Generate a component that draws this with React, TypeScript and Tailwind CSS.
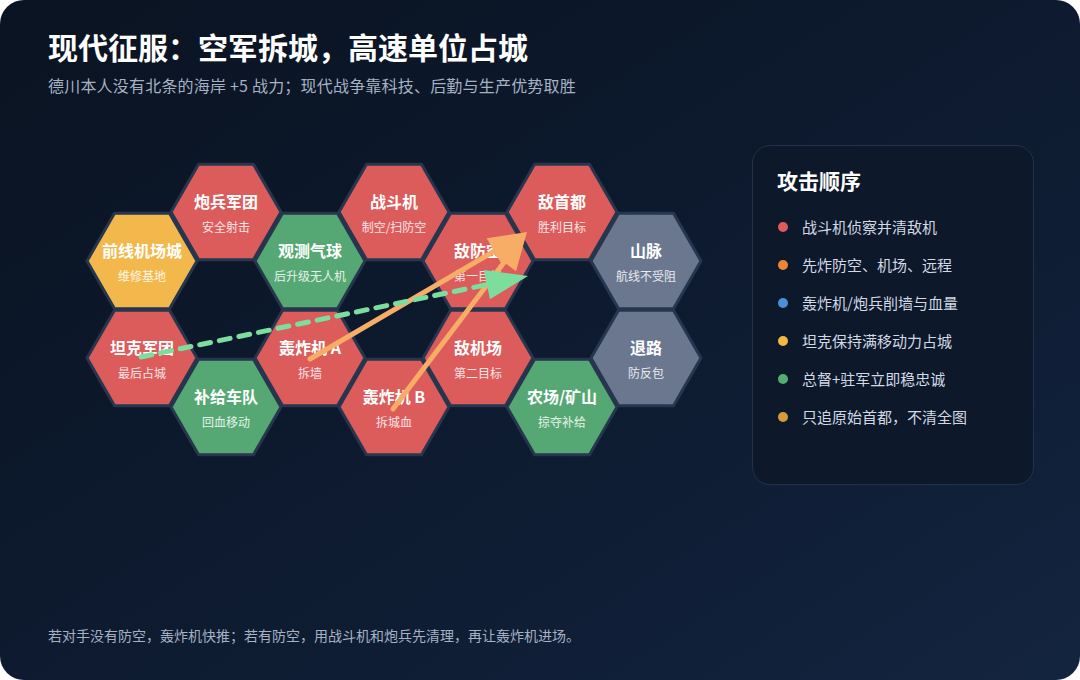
import React from 'react';

type Hex = {
  x: number;
  y: number;
  title: string;
  sub: string;
  fill: string;
};

// page coords of hex centres (flat-top, r≈56, column pitch 84)
const CANVAS_X = 48;
const CANVAS_Y = 146;

const hexes: Hex[] = [
  { x: 142, y: 262, title: '前线机场城', sub: '维修基地', fill: '#f2b84b' },
  { x: 142, y: 359, title: '坦克军团', sub: '最后占城', fill: '#dc5b5b' },
  { x: 226, y: 213, title: '炮兵军团', sub: '安全射击', fill: '#dc5b5b' },
  { x: 226, y: 408, title: '补给车队', sub: '回血移动', fill: '#55a873' },
  { x: 310, y: 262, title: '观测气球', sub: '后升级无人机', fill: '#55a873' },
  { x: 310, y: 359, title: '轰炸机 A', sub: '拆墙', fill: '#dc5b5b' },
  { x: 394, y: 213, title: '战斗机', sub: '制空/扫防空', fill: '#dc5b5b' },
  { x: 394, y: 408, title: '轰炸机 B', sub: '拆城血', fill: '#dc5b5b' },
  { x: 478, y: 262, title: '敌防空', sub: '第一目标', fill: '#dc5b5b' },
  { x: 478, y: 359, title: '敌机场', sub: '第二目标', fill: '#dc5b5b' },
  { x: 562, y: 213, title: '敌首都', sub: '胜利目标', fill: '#dc5b5b' },
  { x: 562, y: 408, title: '农场/矿山', sub: '掠夺补给', fill: '#55a873' },
  { x: 646, y: 262, title: '山脉', sub: '航线不受阻', fill: '#6a778f' },
  { x: 646, y: 359, title: '退路', sub: '防反包', fill: '#6a778f' },
];

const order = [
  { color: '#e05a5a', text: '战斗机侦察并清敌机' },
  { color: '#ec843a', text: '先炸防空、机场、远程' },
  { color: '#4a90d9', text: '轰炸机/炮兵削墙与血量' },
  { color: '#f4b942', text: '坦克保持满移动力占城' },
  { color: '#56ac72', text: '总督+驻军立即稳忠诚' },
  { color: '#d99a3c', text: '只追原始首都，不清全图' },
];

const W = 116;
const H = 102;
const R = 55;

function hexPoints() {
  const cx = W / 2;
  const cy = H / 2;
  const pts: string[] = [];
  for (let k = 0; k < 6; k++) {
    const a = (Math.PI / 3) * k;
    pts.push(`${(cx + R * Math.cos(a)).toFixed(2)},${(cy + R * Math.sin(a)).toFixed(2)}`);
  }
  return pts.join(' ');
}

function HexTile({ hex }: { hex: Hex }) {
  return (
    <div
      className="absolute flex items-center justify-center"
      style={{ left: hex.x - W / 2 - CANVAS_X, top: hex.y - H / 2 - CANVAS_Y, width: W, height: H }}
    >
      <svg className="absolute inset-0" width={W} height={H} viewBox={`0 0 ${W} ${H}`}>
        <polygon points={hexPoints()} fill={hex.fill} stroke="#27364f" strokeWidth={3} strokeLinejoin="round" />
      </svg>
      <div className="relative flex flex-col items-center gap-[8px] pt-[1px]">
        <div className="text-[16px] leading-[20px] font-bold text-white whitespace-nowrap">{hex.title}</div>
        <div className="text-[12px] leading-[16px] text-white/85 whitespace-nowrap">{hex.sub}</div>
      </div>
    </div>
  );
}

function Arrow({
  from,
  to,
  color,
  dashed,
  len = 38,
  half = 15,
}: {
  from: [number, number];
  to: [number, number];
  color: string;
  dashed?: boolean;
  len?: number;
  half?: number;
}) {
  const x1 = from[0] - CANVAS_X;
  const y1 = from[1] - CANVAS_Y;
  const x2 = to[0] - CANVAS_X;
  const y2 = to[1] - CANVAS_Y;
  const dx = x2 - x1;
  const dy = y2 - y1;
  const d = Math.hypot(dx, dy);
  const ux = dx / d;
  const uy = dy / d;
  const bx = x2 - ux * len;
  const by = y2 - uy * len;
  const head = `${x2},${y2} ${bx - uy * half},${by + ux * half} ${bx + uy * half},${by - ux * half}`;
  return (
    <g>
      <line
        x1={x1}
        y1={y1}
        x2={bx + ux * 2}
        y2={by + uy * 2}
        stroke={color}
        strokeWidth={5}
        strokeLinecap="round"
        strokeDasharray={dashed ? '11 9' : undefined}
      />
      <polygon points={head} fill={color} />
    </g>
  );
}

export default function App() {
  return (
    <div className="w-[1080px] h-[680px] bg-white font-['Noto_Sans_CJK_SC','Noto_Sans',sans-serif]">
      <div className="w-full h-full rounded-[24px] overflow-hidden bg-gradient-to-br from-[#0a1321] via-[#0d1a2f] to-[#13243f] flex flex-col px-12 pr-[46px]">
        <div className="pt-[27px]">
          <h1 className="text-[30px] leading-[38px] font-bold text-white">现代征服：空军拆城，高速单位占城</h1>
          <p className="mt-[9px] text-[16px] leading-[22px] tracking-[0.2px] text-[#a6b2c3]">德川本人没有北条的海岸 +5 战力；现代战争靠科技、后勤与生产优势取胜</p>
        </div>

        <div className="mt-[49px] flex items-start justify-between">
          <div className="relative w-[680px] h-[320px]">
            {hexes.map((h) => (
              <HexTile key={h.title} hex={h} />
            ))}
            <svg className="absolute inset-0 pointer-events-none" width={680} height={320}>
              <Arrow from={[310, 360]} to={[527, 233]} color="#f7ad66" />
              <Arrow from={[393, 410]} to={[527, 233]} color="#f7ad66" />
              <Arrow from={[141, 358]} to={[528, 277]} color="#7ddd9e" dashed len={42} half={15} />
            </svg>
          </div>

          <div className="w-[282px] h-[340px] rounded-[18px] border border-[#22324b] bg-[#0d182b] pl-6 pt-[20px]">
            <div className="text-[21px] leading-[28px] font-bold text-white">攻击顺序</div>
            <ul className="mt-[23px] flex flex-col gap-[18px]">
              {order.map((o) => (
                <li key={o.text} className="flex items-center gap-[14px] text-[15px] leading-[20px] text-[#d2d9e4]">
                  <span className="ml-[1px] w-[10px] h-[10px] rounded-full shrink-0" style={{ background: o.color }} />
                  {o.text}
                </li>
              ))}
            </ul>
          </div>
        </div>

        <p className="mt-auto pb-[35px] text-[14px] leading-[20px] text-[#a6b2c4]">
          若对手没有防空，轰炸机快推；若有防空，用战斗机和炮兵先清理，再让轰炸机进场。
        </p>
      </div>
    </div>
  );
}
